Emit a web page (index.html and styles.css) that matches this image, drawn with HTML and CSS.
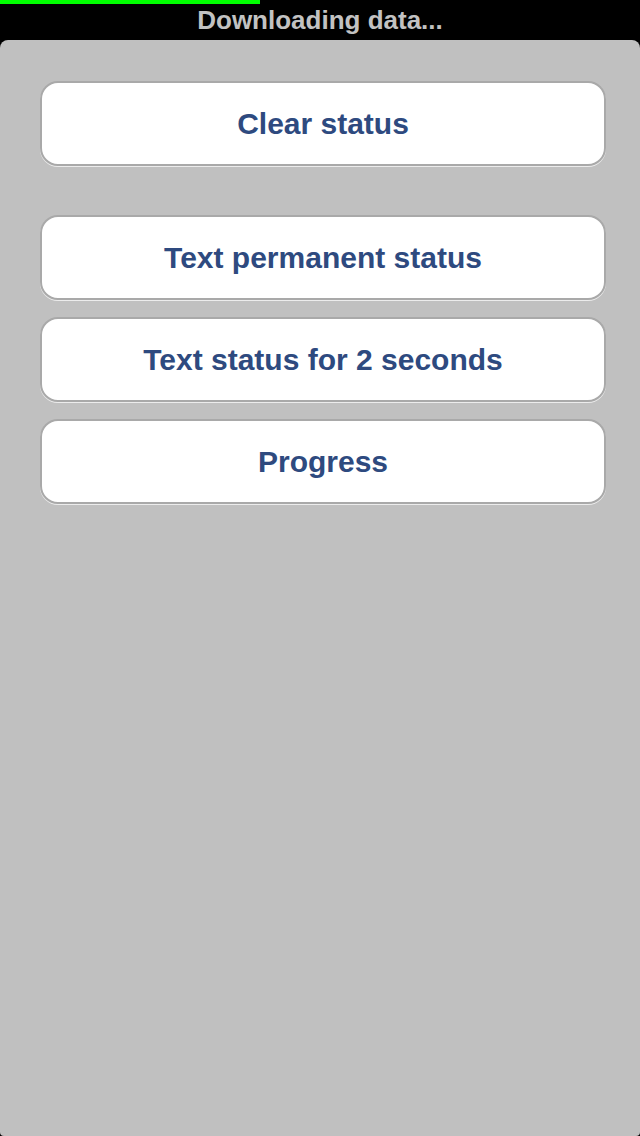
FILE: index.html
```html
<!DOCTYPE html>
<html>
<head>
<meta charset="utf-8">
<link rel="stylesheet" href="styles.css">
</head>
<body>
<div class="screen">
  <div class="statusbar">
    <div class="progress" style="width:260px"></div>
    <div class="status-text">Downloading data...</div>
  </div>
  <div class="content">
    <button class="btn btn-first">Clear status</button>
    <div class="group">
      <button class="btn">Text permanent status</button>
      <button class="btn">Text status for 2 seconds</button>
      <button class="btn">Progress</button>
    </div>
  </div>
</div>
</body>
</html>
```
FILE: styles.css
```css
html, body {
  margin: 0;
  padding: 0;
  background: #000;
}
.screen {
  width: 640px;
  height: 1136px;
  display: flex;
  flex-direction: column;
  background: #000;
  font-family: "Liberation Sans", Arial, sans-serif;
}
.statusbar {
  position: relative;
  height: 40px;
  flex: none;
  display: flex;
  align-items: center;
  justify-content: center;
}
.progress {
  position: absolute;
  left: 0;
  top: 0;
  height: 4px;
  background: #00ff00;
}
.status-text {
  color: #c2c2c2;
  font-weight: bold;
  font-size: 26px;
  line-height: 40px;
  padding-bottom: 1px;
}
.content {
  flex: 1;
  background: #c0c0c0;
  border-radius: 8px 8px 4px 4px;
  padding: 41px 34px 0 40px;
  display: flex;
  flex-direction: column;
}
.group {
  display: flex;
  flex-direction: column;
  gap: 17px;
  margin-top: 49px;
}
.btn {
  height: 85px;
  box-sizing: border-box;
  width: 566px;
  background: #fff;
  border: 2px solid #a9a9a9;
  border-radius: 18px;
  box-shadow: 0 1px 0 #ececec;
  color: #2e4a7f;
  font-family: "Liberation Sans", Arial, sans-serif;
  font-weight: bold;
  font-size: 30px;
  padding: 0;
  margin: 0;
}
```
